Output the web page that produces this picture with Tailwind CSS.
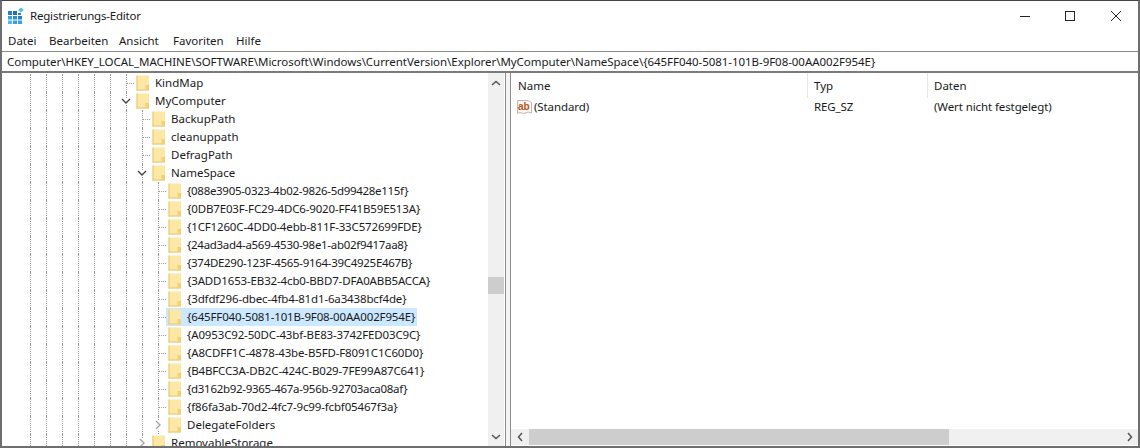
<!DOCTYPE html>
<html lang="de">
<head>
<meta charset="UTF-8">
<title>Registrierungs-Editor</title>
<script src="https://cdn.jsdelivr.net/npm/@tailwindcss/browser@4"></script>
</head>
<body class="bg-white w-[1140px] h-[448px] overflow-hidden font-['Noto_Sans',sans-serif] text-[11.5px] text-[#1a1a1a]">

<div class="w-[1140px] h-[448px] flex flex-col border-l-2 border-r-2 border-b-2 border-t border-[#6e6e6e] border-t-[#444] overflow-hidden">

  <!-- Title bar -->
  <div class="h-[30px] shrink-0 flex items-center pl-[6px]">
    <svg width="16" height="16" viewBox="0 0 16 16" class="shrink-0">
      <rect x="0" y="3" width="4" height="4" fill="#2a7fc4"/><rect x="5" y="3" width="4" height="4" fill="#1e6fb4"/><rect x="10" y="5" width="3" height="2" fill="#2a7fc4"/>
      <rect x="0" y="8" width="4" height="3.500" fill="#35a0e0"/><rect x="5" y="8" width="4" height="3.500" fill="#2a8fd4"/><rect x="10" y="8" width="4" height="3.500" fill="#2a7fc4"/>
      <rect x="0" y="12.500" width="4" height="3.500" fill="#4db8ee"/><rect x="5" y="12.500" width="4" height="3.500" fill="#35a0e0"/><rect x="10" y="12.500" width="4" height="3.500" fill="#35a0e0"/>
      <rect x="11" y="0" width="4" height="4" fill="#5cc2d8" transform="rotate(45 13 2)"/>
    </svg>
    <span class="ml-[6px] tracking-[-0.2px]">Registrierungs-Editor</span>
    <div class="ml-auto flex items-center pr-[16px]">
      <svg width="12" height="12" viewBox="0 0 12 12" class="mr-[33px]"><path d="M1 6.500H11" stroke="#222" fill="none"/></svg>
      <svg width="12" height="12" viewBox="0 0 12 12" class="mr-[34px]"><rect x="1.500" y="1.500" width="9" height="9" stroke="#222" fill="none"/></svg>
      <svg width="12" height="12" viewBox="0 0 12 12"><path d="M1 1L11 11M11 1L1 11" stroke="#222" fill="none"/></svg>
    </div>
  </div>

  <!-- Menu -->
  <div class="h-[20px] shrink-0 flex items-center pl-[6px]">
    <span class="w-[41px]">Datei</span>
    <span class="w-[70px]">Bearbeiten</span>
    <span class="w-[54px]">Ansicht</span>
    <span class="w-[63px]">Favoriten</span>
    <span>Hilfe</span>
  </div>

  <!-- Address bar -->
  <div id="address" class="h-[22px] shrink-0 flex items-center pl-[5px] border-t border-b-2 border-t-[#8a8a8a] border-b-[#7a7a7a] whitespace-nowrap tracking-[-0.045px]">Computer\HKEY_LOCAL_MACHINE\SOFTWARE\Microsoft\Windows\CurrentVersion\Explorer\MyComputer\NameSpace\{645FF040-5081-101B-9F08-00AA002F954E}</div>

  <div class="flex-1 flex min-h-0">

    <!-- Tree pane -->
    <div class="w-[503px] shrink-0 flex">
      <div id="tree" class="flex-1 overflow-hidden pt-[1px]"></div>
      <!-- Vertical scrollbar -->
      <div class="w-[16px] mr-[1px] shrink-0 bg-[#f0f0f0] flex flex-col items-center">
        <svg width="10" height="6" viewBox="0 0 10 6" class="mt-[7px]"><path d="M1 5L5 1.500L9 5" stroke="#555" stroke-width="1.500" fill="none"/></svg>
        <div class="w-full h-[17px] mt-[191px] bg-[#cdcdcd]"></div>
        <svg width="10" height="6" viewBox="0 0 10 6" class="mt-auto mb-[6px]"><path d="M1 1L5 4.500L9 1" stroke="#555" stroke-width="1.500" fill="none"/></svg>
      </div>
    </div>

    <!-- Splitter -->
    <div class="w-[6px] shrink-0 border-l border-r border-[#8c8c8c] bg-[#f4f4f4]"></div>

    <!-- Value pane -->
    <div class="flex-1 min-w-0 flex flex-col">
      <div class="h-[25px] shrink-0 flex items-center">
        <div class="w-[297px] h-full flex items-center pl-[7px] border-r border-[#e5e5e5]">Name</div>
        <div class="w-[120px] h-full flex items-center pl-[6px] border-r border-[#e5e5e5]">Typ</div>
        <div class="pl-[6px]">Daten</div>
      </div>
      <div class="h-[18px] shrink-0 flex items-center">
        <div class="w-[297px] flex items-center pl-[5px]">
          <svg width="17" height="16" viewBox="0 0 17 16" class="shrink-0">
            <path d="M1.500 1.500H12L15.500 3.500V14L12 13L8 14.500L4 13.500L1.500 14.500Z" fill="#fdfaf6" stroke="#c9b8a8"/>
            <text x="2" y="11" font-family="Liberation Sans, sans-serif" font-weight="700" font-size="10" fill="#b4532a">ab</text>
          </svg>
          <span class="ml-[1px] tracking-[-0.1px]">(Standard)</span>
        </div>
        <div class="w-[120px] pl-[6px] tracking-[-0.1px]">REG_SZ</div>
        <div class="pl-[6px] tracking-[-0.1px]">(Wert nicht festgelegt)</div>
      </div>
      <div class="flex-1"></div>
      <!-- Horizontal scrollbar -->
      <div class="h-[16px] mb-[1px] shrink-0 bg-[#f0f0f0] flex items-center">
        <div class="w-[18px] h-full flex items-center justify-center">
          <svg width="6" height="10" viewBox="0 0 6 10"><path d="M5 1L1.500 5L5 9" stroke="#555" stroke-width="1.500" fill="none"/></svg>
        </div>
        <div class="w-[420px] h-full bg-[#cdcdcd]"></div>
        <div class="ml-auto w-[16px] h-full flex items-center justify-center">
          <svg width="6" height="10" viewBox="0 0 6 10"><path d="M1 1L4.500 5L1 9" stroke="#555" stroke-width="1.500" fill="none"/></svg>
        </div>
      </div>
    </div>
  </div>
</div>

<script>
// [label, level, toggle, selected]
const rows = [
  ['KindMap', 7],
  ['MyComputer', 7, 'open'],
  ['BackupPath', 8],
  ['cleanuppath', 8],
  ['DefragPath', 8],
  ['NameSpace', 8, 'open'],
  ['{088e3905-0323-4b02-9826-5d99428e115f}', 9],
  ['{0DB7E03F-FC29-4DC6-9020-FF41B59E513A}', 9],
  ['{1CF1260C-4DD0-4ebb-811F-33C572699FDE}', 9],
  ['{24ad3ad4-a569-4530-98e1-ab02f9417aa8}', 9],
  ['{374DE290-123F-4565-9164-39C4925E467B}', 9],
  ['{3ADD1653-EB32-4cb0-BBD7-DFA0ABB5ACCA}', 9],
  ['{3dfdf296-dbec-4fb4-81d1-6a3438bcf4de}', 9],
  ['{645FF040-5081-101B-9F08-00AA002F954E}', 9, null, true],
  ['{A0953C92-50DC-43bf-BE83-3742FED03C9C}', 9],
  ['{A8CDFF1C-4878-43be-B5FD-F8091C1C60D0}', 9],
  ['{B4BFCC3A-DB2C-424C-B029-7FE99A87C641}', 9],
  ['{d3162b92-9365-467a-956b-92703aca08af}', 9],
  ['{f86fa3ab-70d2-4fc7-9c99-fcbf05467f3a}', 9],
  ['DelegateFolders', 9, 'closed'],
  ['RemovableStorage', 8, 'closed']
];

// mostly digits, these run narrower in the reference
const tight = ['{088e', '{24ad', '{374D', '{d316'];

const folder = `<svg width="14" height="16" viewBox="0 0 14 16" class="shrink-0"><rect x="0.500" y="0.500" width="12.500" height="15" fill="#fde7a4"/><rect x="0.500" y="0.500" width="1" height="15" fill="#e6c672"/><rect x="0.500" y="14.500" width="12.500" height="1" fill="#e6c672"/><rect x="9.500" y="10" width="3.500" height="5" fill="#f3cf76"/></svg>`;
const chevronOpen = `<svg width="10" height="7" viewBox="0 0 10 7" class="absolute left-[3px] top-[6px] bg-white"><path d="M1 1L5 5L9 1" stroke="#444" stroke-width="1.400" fill="none"/></svg>`;
const chevronClosed = `<svg width="7" height="10" viewBox="0 0 7 10" class="absolute left-[5px] top-[4px] bg-white"><path d="M1 1L5 5L1 9" stroke="#a6a6a6" stroke-width="1.400" fill="none"/></svg>`;
const connector = `<div class="absolute left-[9px] top-[9px] w-[7px] border-t border-dotted border-[#9a9a9a]"></div>`;

document.getElementById('tree').innerHTML = rows.map(([label, level, toggle, selected]) => {
  const guides = Array.from({ length: level - 1 }, () =>
    `<div class="w-[16px] h-full shrink-0 relative"><div class="absolute left-[8px] inset-y-0 border-l border-dotted border-[#9a9a9a]"></div></div>`
  ).join('');
  const toggleIcon = toggle === 'open' ? chevronOpen : toggle === 'closed' ? chevronClosed : connector;
  const last = `<div class="w-[16px] h-full shrink-0 relative"><div class="absolute left-[8px] inset-y-0 border-l border-dotted border-[#9a9a9a]"></div>${toggleIcon}</div>`;
  const labelClass = selected ? 'bg-[#cce8ff]' : '';
  let track = '';
  if (label.startsWith('{')) {
    track = tight.includes(label.slice(0, 5)) ? 'tracking-[-0.3px]' : 'tracking-[-0.15px]';
  }
  return `<div class="h-[18px] flex items-center pl-[20px] whitespace-nowrap">${guides}${last}<div class="h-full flex items-center pl-[2px] pr-[2px] ${labelClass}">${folder}<span class="ml-[5px] ${track}">${label}</span></div></div>`;
}).join('');
</script>
</body>
</html>
